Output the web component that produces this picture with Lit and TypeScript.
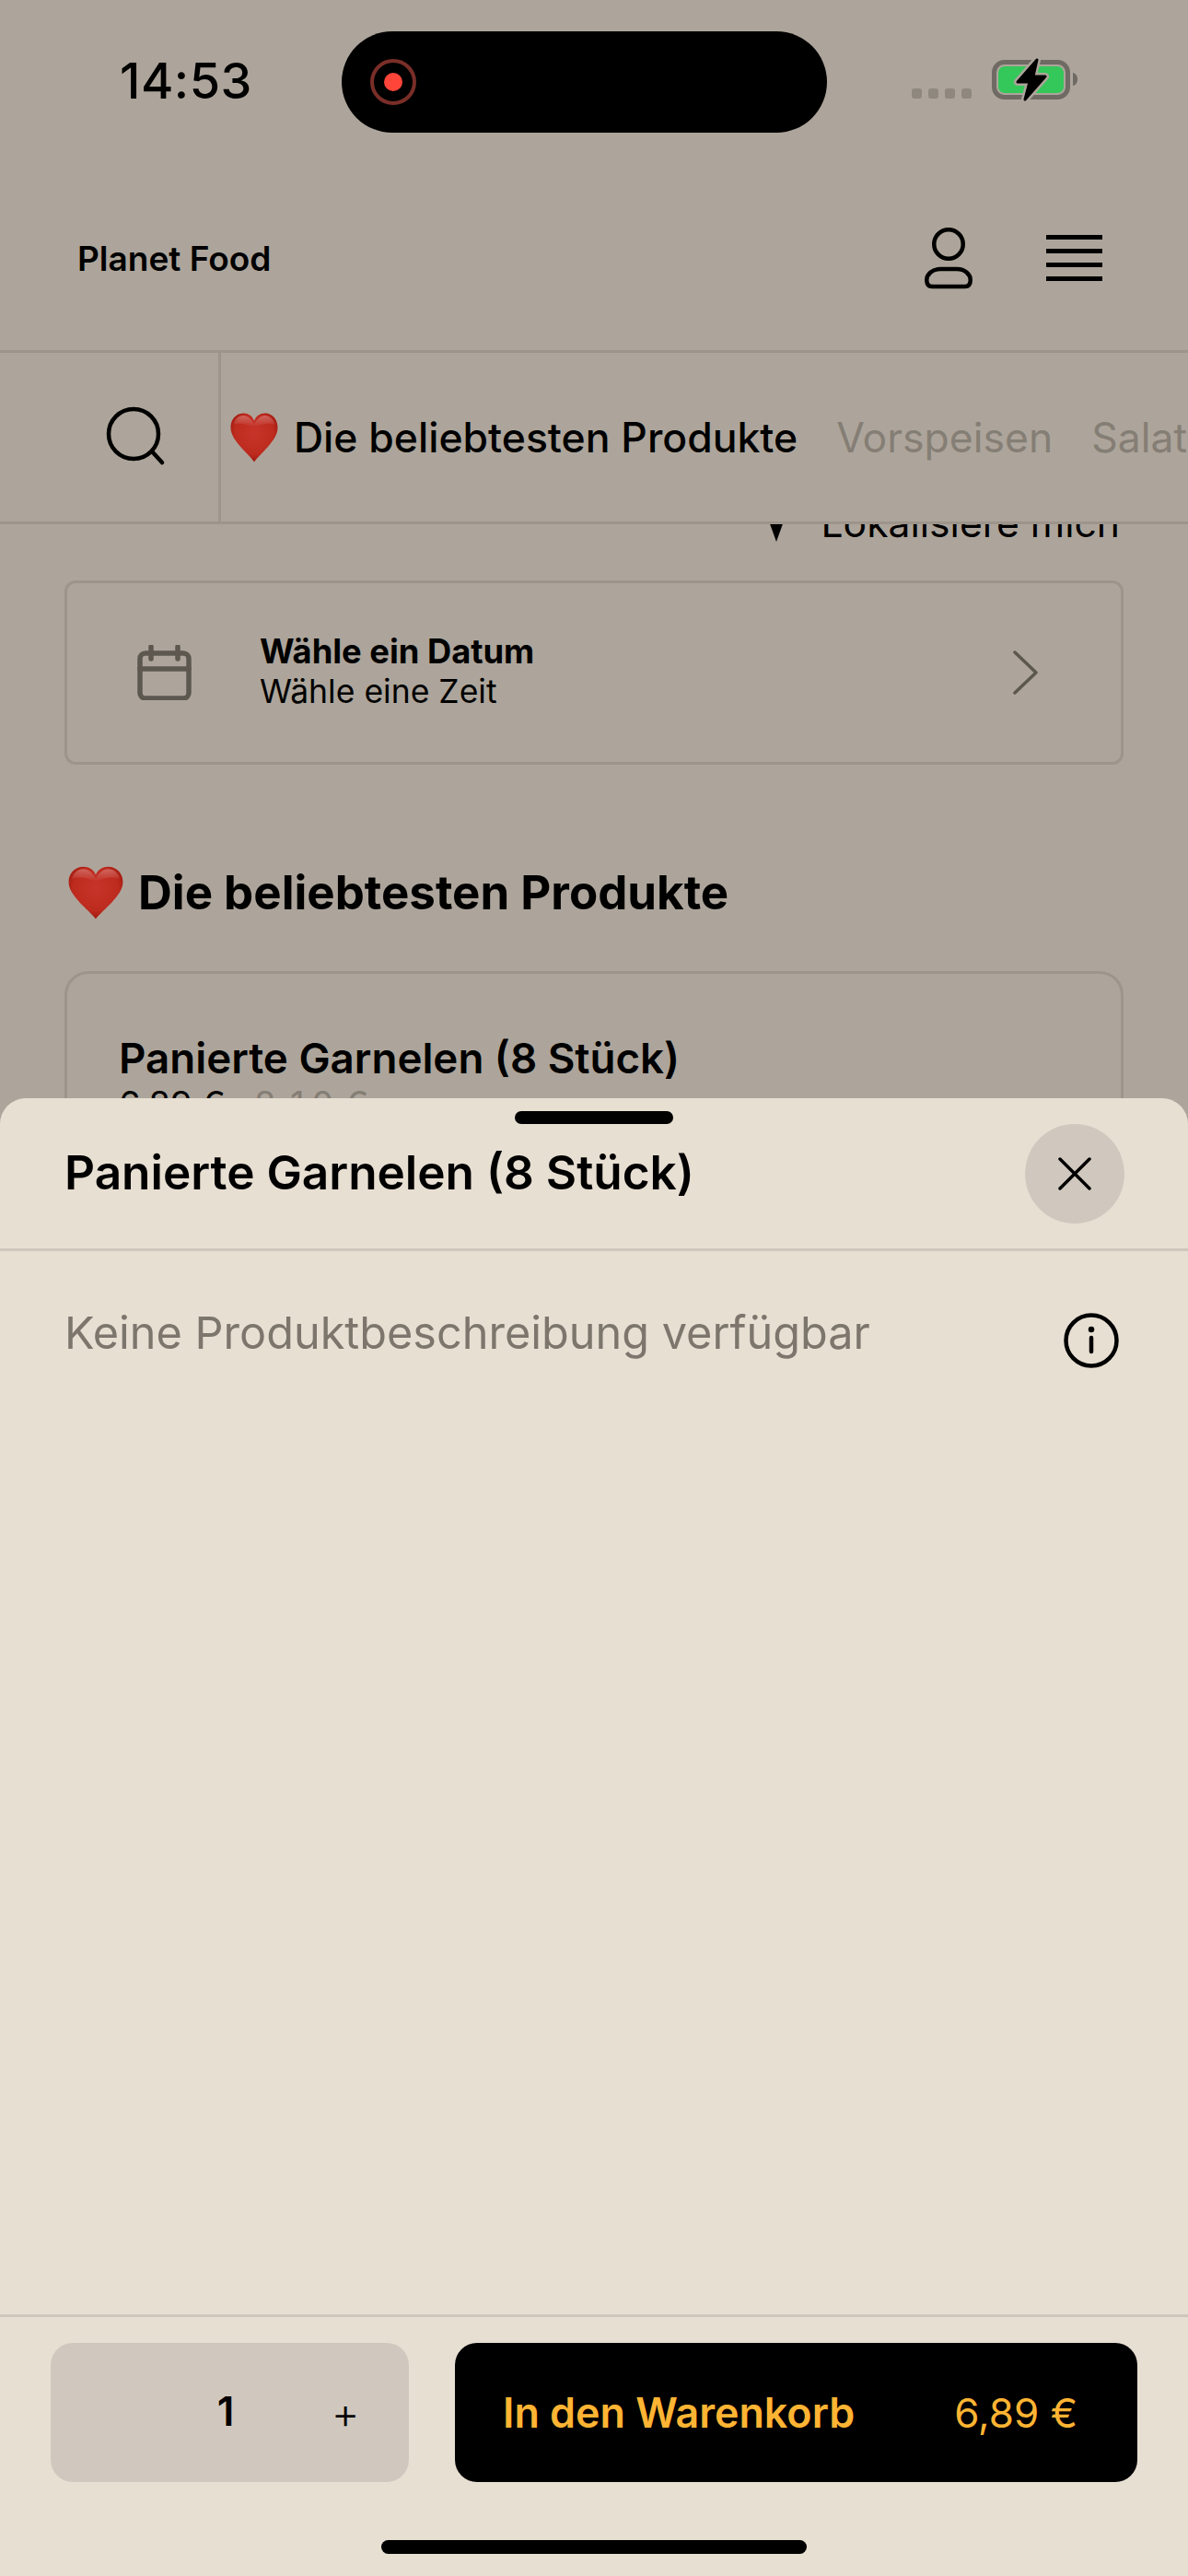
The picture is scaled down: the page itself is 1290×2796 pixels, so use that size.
import { LitElement, html, css, svg } from "lit";
import { customElement } from "lit/decorators.js";

const heart = (cls: string, id: string) => html`<svg class=${cls} viewBox="0 0 52 52" preserveAspectRatio="none" aria-hidden="true">
  <defs>
    <radialGradient id=${id} cx="50%" cy="42%" r="60%">
      <stop offset="0%" stop-color="#c7352a"/>
      <stop offset="70%" stop-color="#bd2a1e"/>
      <stop offset="100%" stop-color="#9c150c"/>
    </radialGradient>
    <linearGradient id="${id}s" x1="0" y1="0" x2="0" y2="1">
      <stop offset="0%" stop-color="#fff" stop-opacity=".28"/>
      <stop offset="100%" stop-color="#fff" stop-opacity="0"/>
    </linearGradient>
  </defs>
  <path d="M26 51.5C22 45 3 31 .8 18.5-1 8 6 .8 14 .6 19.5.5 24 3.5 26 8.5 28 3.5 32.5.5 38 .6 46 .8 53 8 51.2 18.5 49 31 30 45 26 51.5Z" fill="url(#${id})"/>
  <path d="M3.5 13C4.500 6.500 9.500 3 14 3c5 0 9 3.500 12 9 3-5.500 7-9 12-9 4.500 0 9.500 3.500 10.500 10-6-3.500-14-1-22.500 2-8.500-3-16.500-5.500-22.500-2Z" fill="url(#${id}s)"/>
</svg>`;

@customElement("app-root")
export class AppRoot extends LitElement {
  static styles = css`
    :host {
      display: block;
      width: 1290px;
      height: 2796px;
      position: relative;
      overflow: hidden;
      background: #ada59b;
      font-family: Inter, "Noto Sans", sans-serif;
      color: #000;
    }
    .page { display: flex; flex-direction: column; height: 100%; }
    .status { display: flex; align-items: flex-start; height: 180px; padding: 34px 0 0 130px; box-sizing: border-box; flex: none; }
    .time { width: 241px; font-size: 54px; line-height: 108px; font-weight: 500; flex: none; letter-spacing: .5px; }
    .island { width: 527px; height: 110px; border-radius: 55px; background: #000; display: flex; align-items: center; padding-left: 31px; box-sizing: border-box; flex: none; }
    .rec { width: 50px; height: 50px; display: block; }
    .indicators { width: 190px; height: 52px; margin: 26px 0 0 87px; display: block; flex: none; }

    .header { height: 200px; flex: none; display: flex; align-items: center; padding: 0 93px 0 84px; }
    .brand { font-size: 37px; font-weight: 600; flex: 1; }
    .person { width: 52px; height: 68px; display: block; margin-right: 80px; }
    .menu { width: 61px; height: 50px; display: block; }

    .nav { height: 189px; box-sizing: border-box; flex: none; display: flex; border-top: 3px solid #9d958b; border-bottom: 3px solid #9d958b; overflow: hidden; }
    .search { width: 240px; box-sizing: border-box; flex: none; border-right: 3px solid #9d958b; position: relative; display: flex; align-items: center; }
    .search svg { width: 68px; height: 70px; margin-left: 114px; display: block; }
    .tabs { display: flex; align-items: center; gap: 42px; padding-left: 10px; white-space: nowrap; font-size: 44.5px; color: #857e75; }
    .tab { display: flex; align-items: center; gap: 17px; flex: none; }
    .tab.on { color: #000; font-weight: 500; }
    .tab-heart { width: 52px; height: 54px; display: block; }

    .scroll { flex: 1; min-height: 0; overflow: hidden; padding: 0 70px; display: flex; flex-direction: column; }
    .locate { display: flex; justify-content: flex-end; align-items: center; gap: 40px; margin-top: -26px; margin-bottom: 2px; padding-right: 4px; height: 50px; flex: none; font-size: 42.6px; line-height: 50px; }
    .locate svg { width: 18px; height: 50px; display: block; }
    .date { margin-top: 35px; height: 200px; box-sizing: border-box; flex: none; border: 3px solid #9d958b; border-radius: 12px; display: flex; align-items: center; padding: 0 90px 0 76px; }
    .cal { width: 60px; height: 60px; display: block; flex: none; }
    .date-text { flex: 1; margin-left: 73px; font-size: 35.5px; line-height: 42px; margin-top: -2px; }
    .date-text b { display: block; font-weight: 700; font-size: 36.3px; }
    .date-text span { display: block; margin-top: 2px; }
    .chev { width: 28px; height: 48px; display: block; flex: none; }
    .h2 { display: flex; align-items: center; gap: 16px; margin: 109px 0 0; height: 60px; font-size: 51px; font-weight: 700; line-height: 60px; flex: none; }
    .h2-heart { width: 60px; height: 58px; display: block; flex: none; margin-left: 4px; }
    .card { margin-top: 55px; flex: none; height: 400px; box-sizing: border-box; border: 3px solid #9d958b; border-radius: 26px; padding: 65px 56px; }
    .card-name { font-size: 45.7px; font-weight: 600; line-height: 54px; }
    .card-price { font-size: 38px; line-height: 44px; display: flex; gap: 31px; }
    .card-price s { color: #857e75; text-decoration: none; font-variant-numeric: tabular-nums; letter-spacing: 1px; }

    .sheet { position: absolute; left: 0; right: 0; top: 1192px; bottom: 0; background: #e8dfd3; border-radius: 28px 28px 0 0; display: flex; flex-direction: column; }
    .grab { width: 172px; height: 14px; border-radius: 7px; background: #000; margin: 14px auto 0; flex: none; }
    .sheet-head { height: 138px; box-sizing: border-box; flex: none; display: flex; align-items: flex-start; justify-content: space-between; padding: 0 69px 0 70px; border-bottom: 3px solid #cfc7bc; }
    .sheet-title { font-size: 51.3px; line-height: 104px; font-weight: 600; margin: 0; }
    .close { width: 108px; height: 108px; border-radius: 50%; background: #d0c8be; display: flex; align-items: center; justify-content: center; flex: none; }
    .close svg { width: 36px; height: 36px; display: block; }
    .sheet-body { flex: 1; min-height: 0; display: flex; align-items: flex-start; justify-content: space-between; padding: 59px 75px 0 70px; }
    .desc { font-size: 48.6px; line-height: 60px; color: #7c766d; }
    .info { width: 60px; height: 60px; display: block; margin-top: 8px; }
    .foot { flex: none; border-top: 3px solid #cfc7bc; padding: 28px 55px 0; display: flex; gap: 50px; }
    .qty { width: 389px; height: 151px; background: #d0c8be; border-radius: 24px; display: grid; grid-template-columns: 125px 130px 130px; align-items: center; justify-items: center; flex: none; }
    .qty-n { font-size: 44px; font-weight: 600; margin-top: -4px; }
    .qty-plus { font-size: 47px; font-weight: 300; margin-top: 0; }
    .buy { flex: 1; height: 151px; background: #000; border-radius: 24px; color: #ffb433; display: flex; align-items: center; justify-content: space-between; padding: 0 65px 0 52px; font-size: 44px; }
    .buy b { font-weight: 600; font-size: 44.8px; }
    .home { width: 462px; height: 15px; border-radius: 8px; background: #000; margin: 63px auto 24px; flex: none; }
  `;

  render() {
    return html`
      <div class="page">
        <div class="status">
          <div class="time">14:53</div>
          <div class="island">
            <svg class="rec" viewBox="0 0 50 50" aria-hidden="true">
              <circle cx="25" cy="25" r="23" fill="none" stroke="#7a2e28" stroke-width="4"/>
              <circle cx="25" cy="25" r="10" fill="#ff453a"/>
            </svg>
          </div>
          <svg class="indicators" viewBox="0 0 190 52" aria-hidden="true">
            ${[5, 23, 41, 59].map((x) => svg`<rect x=${x} y="36" width="11" height="11" rx="3" fill="#8f887f"/>`)}
            <rect x="94.500" y="7.500" width="80" height="38" rx="11" fill="none" stroke="#6f6a63" stroke-width="5"/>
            <rect x="99" y="12" width="71" height="29" rx="7" fill="#34c759"/>
            <path d="M180 19c3 .5 5 3 5 7s-2 6.500-5 7Z" fill="#6f6a63"/>
            <path d="M141 5 120 29h13l-5 19 22-25h-13Z" fill="#000" stroke="#ada59b" stroke-width="8" stroke-linejoin="round"/>
            <path d="M141 5 120 29h13l-5 19 22-25h-13Z" fill="#000" stroke="#000" stroke-width="3" stroke-linejoin="round"/>
          </svg>
        </div>

        <div class="header">
          <div class="brand">Planet Food</div>
          <svg class="person" viewBox="0 0 52 68" fill="none" stroke="#000" stroke-width="4.500" aria-hidden="true">
            <circle cx="26" cy="19" r="15.750"/>
            <path d="M17 46h18c9 0 14.750 6 14.750 12 0 5-2 7-6 7H8.250c-4 0-6-2-6-7 0-6 5.750-12 14.750-12Z"/>
          </svg>
          <svg class="menu" viewBox="0 0 61 50" fill="#000" aria-hidden="true">
            <rect y="0" width="61" height="5"/><rect y="15" width="61" height="5"/><rect y="30" width="61" height="5"/><rect y="45" width="61" height="5"/>
          </svg>
        </div>

        <div class="nav">
          <div class="search">
            <svg viewBox="0 0 68 70" fill="none" stroke="#000" stroke-width="4.500" stroke-linecap="round" aria-hidden="true">
              <circle cx="31" cy="31" r="27"/><path d="M51 50 62 62"/>
            </svg>
          </div>
          <div class="tabs">
            <div class="tab on">${heart("tab-heart", "h1")}<span>Die beliebtesten Produkte</span></div>
            <div class="tab">Vorspeisen</div>
            <div class="tab">Salate</div>
          </div>
        </div>

        <div class="scroll">
          <div class="locate">
            <svg viewBox="0 0 18 50" aria-hidden="true"><path d="M0 20h18L9 45Z" fill="#000"/></svg>
            <span>Lokalisiere mich</span>
          </div>
          <div class="date">
            <svg class="cal" viewBox="0 0 60 60" fill="none" stroke="#5c574f" stroke-width="5.500" stroke-linecap="round" aria-hidden="true">
              <rect x="3" y="9" width="53" height="49" rx="6"/><path d="M3 26h53M15 2v13M44 2v13"/>
            </svg>
            <div class="date-text"><b>Wähle ein Datum</b><span>Wähle eine Zeit</span></div>
            <svg class="chev" viewBox="0 0 28 48" fill="none" stroke="#5c574f" stroke-width="3.500" stroke-linecap="round" stroke-linejoin="round" aria-hidden="true">
              <path d="M3 2 26 24 3 46"/>
            </svg>
          </div>
          <div class="h2">${heart("h2-heart", "h2")}<span>Die beliebtesten Produkte</span></div>
          <div class="card">
            <div class="card-name">Panierte Garnelen (8 Stück)</div>
            <div class="card-price"><span>6,89 €</span><s>8,10 €</s></div>
          </div>
        </div>
      </div>

      <div class="sheet">
        <div class="grab"></div>
        <div class="sheet-head">
          <h1 class="sheet-title">Panierte Garnelen (8 Stück)</h1>
          <div class="close">
            <svg viewBox="0 0 36 36" fill="none" stroke="#000" stroke-width="3.500" stroke-linecap="round" aria-hidden="true"><path d="M2 2 34 34M34 2 2 34"/></svg>
          </div>
        </div>
        <div class="sheet-body">
          <div class="desc">Keine Produktbeschreibung verfügbar</div>
          <svg class="info" viewBox="0 0 60 60" fill="none" stroke="#000" stroke-width="4.500" stroke-linecap="round" aria-hidden="true">
            <circle cx="30" cy="30" r="27.500"/><path d="M30 27v15"/><circle cx="30" cy="18" r="2.500" fill="#000" stroke-width="1.500"/>
          </svg>
        </div>
        <div class="foot">
          <div class="qty"><span></span><span class="qty-n">1</span><span class="qty-plus">+</span></div>
          <div class="buy"><b>In den Warenkorb</b><span>6,89 €</span></div>
        </div>
        <div class="home"></div>
      </div>
    `;
  }
}
